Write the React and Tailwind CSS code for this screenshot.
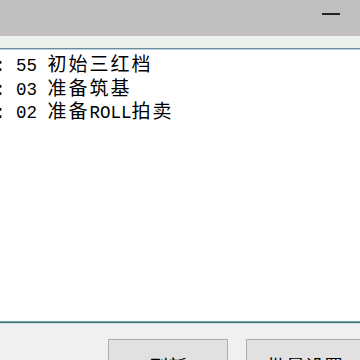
import React from "react";

const lines = [": 55 初始三红档", ": 03 准备筑基", ": 02 准备ROLL拍卖"];

function Runs({ text }) {
  const runs = [];
  let cur = "";
  let curAscii = null;
  for (const ch of text) {
    const a = ch.charCodeAt(0) < 128;
    if (curAscii === null || a === curAscii) {
      cur += ch;
      curAscii = a;
    } else {
      runs.push([curAscii, cur]);
      cur = ch;
      curAscii = a;
    }
  }
  if (cur) runs.push([curAscii, cur]);
  return runs.map(([a, t], i) =>
    a ? (
      <span key={i} className="font-['Liberation_Mono',monospace] text-[17.5px] whitespace-pre">
        {t}
      </span>
    ) : (
      <span key={i} className="font-['Noto_Sans_CJK_SC',sans-serif] text-[19px] tracking-[2px] whitespace-pre">
        {t}
      </span>
    )
  );
}

export default function App() {
  return (
    <div className="w-[360px] h-[360px] overflow-hidden bg-[#f0f0f0] flex flex-col">
      <div className="h-[34px] shrink-0 bg-[#bfbfbf] flex items-center justify-end pr-[20px]">
        <div className="w-[18px] h-[2px] bg-[#222] mb-[6px]" />
      </div>
      <div className="h-[2px] shrink-0 bg-[#c6bcc2]" />
      <div className="h-[12px] shrink-0 bg-[#eef0ee]" />
      <div className="h-[1px] shrink-0 bg-[#6d8b9b]" />
      <div className="h-[1px] shrink-0 bg-[#b9d3e0]" />
      <div className="h-[271px] shrink-0 bg-white text-black pt-[1px] overflow-hidden">
        {lines.map((l, i) => (
          <div key={i} className="leading-[23.5px] h-[23.5px] ml-[-5px] whitespace-nowrap">
            <Runs text={l} />
          </div>
        ))}
      </div>
      <div className="h-[1px] shrink-0 bg-[#6aa3a3]" />
      <div className="h-[1px] shrink-0 bg-[#4f7a7c]" />
      <div className="h-[1px] shrink-0 bg-[#c9dde6]" />
      <div className="flex-1 flex pt-[15px] overflow-hidden">
        <div className="shrink-0 ml-[108px] w-[120px] h-[30px] border border-[#adadad] bg-[#e1e1e1] flex justify-center pt-[16px] font-['Noto_Sans_CJK_SC',sans-serif] text-[19px] leading-none text-black">
          刷新
        </div>
        <div className="shrink-0 ml-[18px] w-[130px] h-[30px] border border-r-0 border-[#adadad] bg-[#e1e1e1] flex justify-start pl-[20px] pt-[16px] font-['Noto_Sans_CJK_SC',sans-serif] text-[19px] leading-none text-black">
          批量设置
        </div>
      </div>
    </div>
  );
}
